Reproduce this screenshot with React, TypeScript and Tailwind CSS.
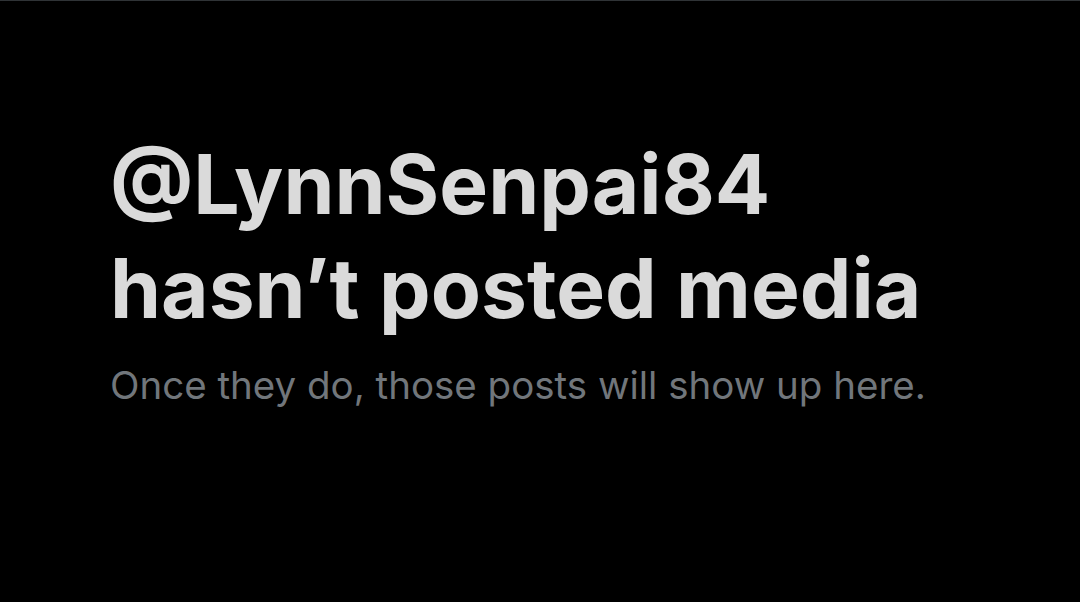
const App = () => {
    return (
        <div className="w-[1080px] h-[602px] bg-black border-t border-[#2f3336] font-['Inter','Liberation_Sans',sans-serif] overflow-hidden">
            <div className="flex flex-col pl-[110px] pt-[132px]">
                <h1 className="text-[82px] leading-[104px] font-bold text-[#dadada]">
                    @LynnSenpai84
                    <br />
                    hasn’t posted media
                </h1>
                <p className="mt-[22px] text-[38.5px] leading-[44px] text-[#71767b]">
                    Once they do, those posts will show up here.
                </p>
            </div>
        </div>
    )
}

export default App
